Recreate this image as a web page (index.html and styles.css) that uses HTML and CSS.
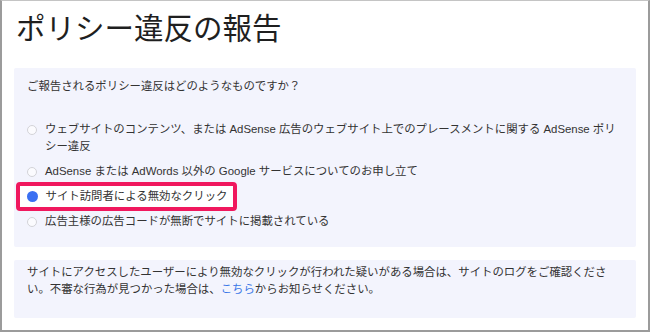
FILE: index.html
```html
<!DOCTYPE html>
<html lang="ja">
<head>
<meta charset="utf-8">
<title>ポリシー違反の報告</title>
<link rel="stylesheet" href="styles.css">
</head>
<body>
<div class="frame">
  <h1 class="title">ポリシー違反の報告</h1>
  <section class="panel panel-question">
    <p class="question">ご報告されるポリシー違反はどのようなものですか？</p>
    <div class="options">
      <label class="option"><span class="radio"></span><span class="label-text">ウェブサイトのコンテンツ、または AdSense 広告のウェブサイト上でのプレースメントに関する AdSense ポリシー違反</span></label>
      <label class="option"><span class="radio"></span><span class="label-text">AdSense または AdWords 以外の Google サービスについてのお申し立て</span></label>
      <label class="option option-selected"><span class="radio radio-on"></span><span class="label-text">サイト訪問者による無効なクリック</span></label>
      <label class="option"><span class="radio"></span><span class="label-text">広告主様の広告コードが無断でサイトに掲載されている</span></label>
    </div>
  </section>
  <section class="panel panel-info">
    <p class="info">サイトにアクセスしたユーザーにより無効なクリックが行われた疑いがある場合は、サイトのログをご確認ください。不審な行為が見つかった場合は、<a class="link" href="#">こちら</a>からお知らせください。</p>
  </section>
</div>
</body>
</html>
```
FILE: styles.css
```css
html, body {
  margin: 0;
  padding: 0;
  background: #ffffff;
}
.frame {
  width: 650px;
  height: 332px;
  box-sizing: border-box;
  border-left: 2px solid #9b9b9b;
  border-right: 2px solid #9b9b9b;
  border-bottom: 2px solid #9b9b9b;
  border-top: 1px solid #c4c4c4;
  padding: 7px 12px 0 12px;
  font-family: "Liberation Sans", "Noto Sans CJK JP", sans-serif;
  color: #333333;
  overflow: hidden;
}
.title {
  margin: 0 0 0 2px;
  font-family: "Noto Sans CJK JP", sans-serif;
  font-weight: 400;
  font-size: 29.5px;
  line-height: 36px;
  color: #1f1f1f;
  letter-spacing: 0;
}
.panel {
  background: #f3f4fd;
  border-radius: 2px;
  width: 622px;
  box-sizing: border-box;
}
.panel-question {
  margin-top: 24px;
  padding: 10px 12px 17px 13px;
}
.question {
  margin: 0;
  font-size: 11.4px;
  line-height: 17px;
}
.options {
  margin-top: 26px;
  display: flex;
  flex-direction: column;
  align-items: flex-start;
  gap: 8px;
}
.option {
  display: inline-flex;
  align-items: flex-start;
  font-size: 11.4px;
  line-height: 17px;
  position: relative;
  isolation: isolate;
}
.label-text {
  display: block;
}
.radio {
  flex: none;
  width: 10px;
  height: 10px;
  box-sizing: border-box;
  border: 1px solid #d3d3d8;
  border-radius: 50%;
  background: #fbfbfe;
  margin: 3.5px 8px 0 0;
}
.radio-on {
  width: 11px;
  height: 11px;
  border: none;
  background: #3a6ff2;
  margin: 3px 7.5px 0 0;
}
.option-selected::before {
  content: "";
  position: absolute;
  top: -6px;
  bottom: -6px;
  left: -11px;
  right: -10px;
  border: 4.5px solid #f0185e;
  border-radius: 4px;
  background: #ffffff;
  z-index: -1;
}
.panel-info {
  margin-top: 13px;
  padding: 4px 21px 20px 13px;
}
.info {
  margin: 0;
  font-size: 11.4px;
  line-height: 17px;
}
.link {
  color: #3b78e7;
  text-decoration: none;
}
```
